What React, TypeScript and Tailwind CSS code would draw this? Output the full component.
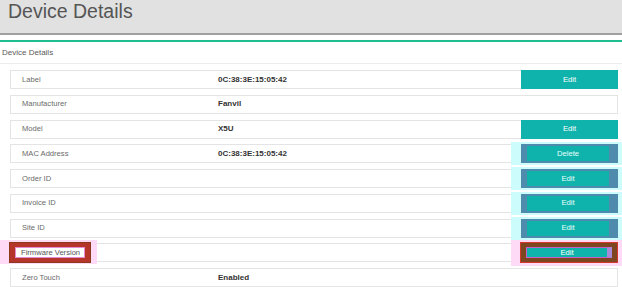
import React from 'react';

type Row = {
    label: string;
    value?: string;
    action?: string;
    mark?: 'cyan' | 'pink';
};

const rows: Row[] = [
    { label: 'Label', value: '0C:38:3E:15:05:42', action: 'Edit' },
    { label: 'Manufacturer', value: 'Fanvil' },
    { label: 'Model', value: 'X5U', action: 'Edit' },
    { label: 'MAC Address', value: '0C:38:3E:15:05:42', action: 'Delete', mark: 'cyan' },
    { label: 'Order ID', action: 'Edit', mark: 'cyan' },
    { label: 'Invoice ID', action: 'Edit', mark: 'cyan' },
    { label: 'Site ID', action: 'Edit', mark: 'cyan' },
    { label: 'Firmware Version', action: 'Edit', mark: 'pink' },
    { label: 'Zero Touch', value: 'Enabled' },
];

function ActionButton({ row }: { row: Row }) {
    if (row.mark === 'pink') {
        return (
            <div className="relative -mr-px flex h-[21px] w-[98px] shrink-0 items-center justify-center border border-[#d0392c] bg-[#7d4621] px-[5px]">
                <button className="flex h-[11px] w-full items-center justify-center border border-[#c85ec8] border-r-[5px] border-r-[#a98ad6] bg-[#0fb3ab] text-[7.7px] leading-none text-white">
                    {row.action}
                </button>
            </div>
        );
    }
    if (row.mark === 'cyan') {
        return (
            <button className="relative -mr-px flex h-[19px] w-[97px] shrink-0 items-center justify-center border-y-2 border-l-[6px] border-r-[9px] border-[#4f8bad] bg-[#0fb3ab] text-[7.7px] leading-none text-[#e8ffff]">
                {row.action}
            </button>
        );
    }
    return (
        <button className="relative -mr-px flex h-[19px] w-[97px] shrink-0 items-center justify-center bg-[#0fb3ab] text-[7.7px] leading-none text-white">
            {row.action}
        </button>
    );
}

function DetailRow({ row }: { row: Row }) {
    return (
        <div className="relative flex h-[19px] items-center border border-[#e4e4e4] bg-white">
            {row.mark === 'cyan' && (
                <div className="absolute -top-[3px] -bottom-[3px] right-[-5px] w-[111px] bg-[#cdfcfd]" />
            )}
            {row.mark === 'pink' && (
                <>
                    <div className="absolute -top-[4px] left-[-11px] h-[24px] w-[97px] bg-[#ffdaf6]" />
                    <div className="absolute -top-[4px] right-[-5px] h-[26px] w-[111px] bg-[#ffdaf6]" />
                </>
            )}
            {row.mark === 'pink' ? (
                <div className="w-[207px] shrink-0">
                    <div className="relative -ml-[2px] flex h-[21px] w-[82px] items-center border border-[#8b3a1d] bg-[#b6352a] px-[5px]">
                        <span className="flex h-[11px] w-full items-center border border-[#e58ad2] bg-white pl-[5px] text-[7.6px] leading-none text-[#555]">
                            {row.label}
                        </span>
                    </div>
                </div>
            ) : (
                <div className="w-[207px] shrink-0 pl-[11px] text-[7.6px] leading-none text-[#6a6a6a]">{row.label}</div>
            )}
            <div className="flex-1 text-[8px] font-bold leading-none text-[#333]">{row.value}</div>
            {row.action && <ActionButton row={row} />}
        </div>
    );
}

export default function App() {
    return (
        <div className="h-[287px] w-[622px] overflow-hidden bg-white font-['Liberation_Sans',Arial,sans-serif]">
            <div className="h-[35px] border-b-2 border-[#a0a0a0] bg-[#e1e1e1] pl-[8px] pt-[2px]">
                <h1 className="text-[19.5px] leading-none text-[#555]">Device Details</h1>
            </div>
            <div className="mt-[4.5px] border-t-2 border-[#1dbf8f]">
                <div className="border-b border-[#ececec] pb-[6px] pl-[2px] pt-[7.5px] text-[8px] leading-none text-[#5a5a5a]">
                    Device Details
                </div>
                <div className="flex flex-col gap-[5.75px] pl-[10px] pr-[4px] pt-[6px]">
                    {rows.map((row) => (
                        <DetailRow key={row.label} row={row} />
                    ))}
                </div>
            </div>
        </div>
    );
}
